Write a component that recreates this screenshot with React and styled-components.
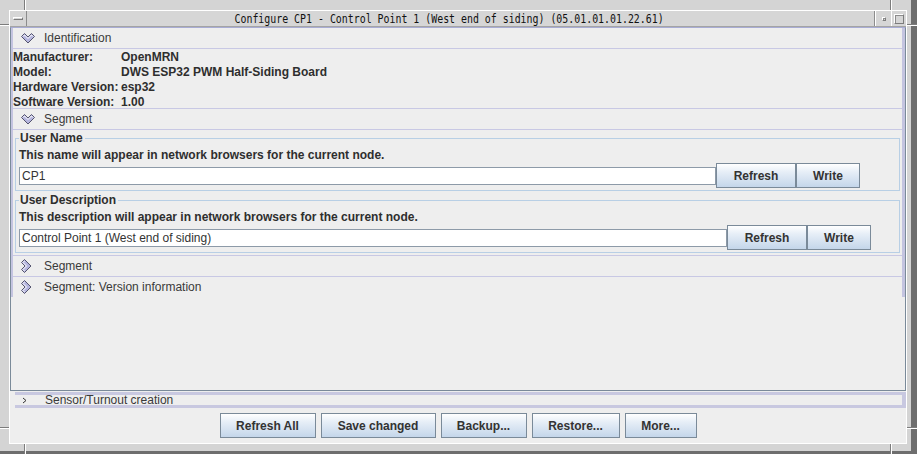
import React from 'react'
import styled, { createGlobalStyle } from 'styled-components'

const GlobalStyle = createGlobalStyle`
  * { box-sizing: border-box; }
  html, body { margin: 0; padding: 0; background: #6e6e6e; }
  body {
    font-family: "Liberation Sans", Arial, sans-serif;
    font-size: 12px;
    color: #333;
  }
`

const Screen = styled.div`
  position: relative;
  width: 917px;
  height: 454px;
  overflow: hidden;
  background: #6e6e6e;
`

const Frame = styled.div`
  width: 911px;
  height: 451px;
  background: #d4d4d4;
  padding: 10px 4px 7px 9px;
`

const Tick = styled.div`
  position: absolute;
  left: ${p => p.$left}px;
  top: ${p => p.$top}px;
  width: ${p => (p.$vertical ? 2 : p.$len)}px;
  height: ${p => (p.$vertical ? p.$len : 2)}px;
  ${p => p.$vertical
    ? 'border-left: 1px solid #7c7c7c; border-right: 1px solid #fff;'
    : 'border-top: 1px solid #7c7c7c; border-bottom: 1px solid #fff;'}
`

const Window = styled.div`
  height: 100%;
  display: flex;
  flex-direction: column;
  border-left: 1px solid #fff;
  border-right: 1px solid #fff;
  border-bottom: 1px solid #fff;
`

const TitleBar = styled.div`
  height: 17px;
  display: flex;
  background: #d6d6d6;
  border-top: 1px solid #fff;
  border-bottom: 1px solid #a4a4a4;
`

const TitleButton = styled.div`
  width: ${p => p.$w}px;
  display: flex;
  align-items: center;
  justify-content: center;
  border-left: ${p => (p.$menu ? 'none' : '1px solid #fff')};
  border-right: ${p => (p.$menu ? '1px solid #8c8c8c' : 'none')};
  box-shadow: ${p => (p.$sep ? '-1px 0 0 #8c8c8c' : 'none')};
`

const MenuGlyph = styled.span`
  width: 10px;
  height: 3px;
  border-top: 1px solid #fff;
  border-left: 1px solid #fff;
  border-bottom: 1px solid #7c7c7c;
  border-right: 1px solid #7c7c7c;
`

const BoxGlyph = styled.span`
  width: ${p => p.$size}px;
  height: ${p => p.$size}px;
  border-top: 1px solid #fff;
  border-left: 1px solid #fff;
  border-bottom: 1px solid #7c7c7c;
  border-right: 1px solid #7c7c7c;
  box-shadow: inset 1px 1px 0 #8c8c8c;
`

const Title = styled.div`
  flex: 1;
  display: flex;
  align-items: center;
  justify-content: center;
  overflow: hidden;
  white-space: nowrap;
  span {
    display: inline-block;
    font-family: "DejaVu Sans Mono", "Liberation Mono", monospace;
    font-size: 12px;
    color: #111;
    transform: scaleX(0.825);
    margin-left: -4px;
  }
`

const Body = styled.div`
  flex: 1;
  display: flex;
  flex-direction: column;
  background: #eeeeee;
  padding-bottom: 5px;
`

const ScrollPane = styled.div`
  height: 364px;
  border: 1px solid #7a8a99;
  border-top-color: #a8acd4;
`

const Panel = styled.div`
  border-left: 2px solid #c4c4e0;
  border-right: 3px solid #c4c4e0;
`

const Header = styled.div`
  height: ${p => (p.$last ? 20 : 21)}px;
  display: flex;
  align-items: center;
  padding-left: 8px;
  border-bottom: ${p => (p.$last ? 'none' : '1px solid #c8c8e4')};
  color: #3a3a3a;
`

const IconBox = styled.span`
  width: 23px;
  display: flex;
  align-items: center;
`

const InfoGrid = styled.div`
  height: 60px;
  display: grid;
  grid-template-columns: 108px 1fr;
  grid-auto-rows: 15px;
  align-items: center;
  font-weight: bold;
  color: #2e2e2e;
  border-bottom: 1px solid #c8c8e4;
`

const SegmentBody = styled.div`
  padding: 1px 2px 2px 2px;
  border-bottom: 1px solid #c8c8e4;
`

const Group = styled.fieldset`
  margin: 0;
  min-width: 0;
  border: 1px solid #b8cfe5;
  padding: 3px 4px 2px 3px;
  & + & { margin-top: 2px; }
`

const Legend = styled.legend`
  padding: 0 2px 0 1px;
  line-height: 14px;
  font-weight: bold;
  color: #2e2e2e;
`

const Desc = styled.div`
  line-height: 15px;
  font-weight: bold;
  color: #2e2e2e;
`

const FieldRow = styled.div`
  height: 25px;
  display: flex;
  align-items: center;
`

const TextField = styled.input`
  width: ${p => p.$w}px;
  height: 18px;
  margin: 0;
  padding: 0 2px;
  border: 1px solid #8d9aa8;
  background: #fff;
  font-family: "Liberation Sans", Arial, sans-serif;
  font-size: 12px;
  color: #333;
  outline: none;
`

const Button = styled.button`
  width: ${p => p.$w}px;
  height: 25px;
  margin: 0;
  padding: 0;
  flex: none;
  border: 1px solid #7a8a99;
  background: linear-gradient(#ffffff 0%, #e6eef7 35%, #c4d6ea 100%);
  font-family: "Liberation Sans", Arial, sans-serif;
  font-size: 12px;
  font-weight: bold;
  color: #333;
`

const SubPane = styled.div`
  height: 16px;
  margin: 1px 0 0 5px;
  display: flex;
  align-items: center;
  padding-left: 7px;
  border-top: 3px solid #c8c8e0;
  border-bottom: 3px solid #c8c8e0;
  border-right: 4px solid #c8c8e0;
  line-height: 10px;
  color: #3a3a3a;
`

const ButtonBar = styled.div`
  margin-top: 5px;
  height: 25px;
  display: flex;
  justify-content: center;
  gap: 5px;
`

const ChevronDown = () => (
  <svg width="14" height="11" viewBox="0 0 14 11">
    <path d="M0.5 3.5 L3.5 0.5 L7 4 L10.5 0.5 L13.5 3.5 L7 10 Z" fill="#b6b6de" stroke="#55556e" strokeWidth="1" />
    <path d="M2 3.5 L3.5 2 L7 5.5 L10.5 2 L12 3.5" fill="none" stroke="#fff" strokeWidth="1" />
  </svg>
)

const ChevronRight = () => (
  <svg width="11" height="14" viewBox="0 0 11 14">
    <path d="M3.5 0.5 L0.5 3.5 L4 7 L0.5 10.5 L3.5 13.5 L10 7 Z" fill="#b6b6de" stroke="#55556e" strokeWidth="1" />
    <path d="M3.5 2 L2 3.5 L5.5 7 L2 10.5 L3.5 12" fill="none" stroke="#fff" strokeWidth="1" />
  </svg>
)

const SmallArrow = () => (
  <svg width="6" height="7" viewBox="0 0 6 7">
    <path d="M1 1 L4 3.5 L1 6" fill="none" stroke="#333" strokeWidth="1" />
  </svg>
)

const info = [
  ['Manufacturer:', 'OpenMRN'],
  ['Model:', 'DWS ESP32 PWM Half-Siding Board'],
  ['Hardware Version:', 'esp32'],
  ['Software Version:', '1.00'],
]

const groups = [
  { title: 'User Name', desc: 'This name will appear in network browsers for the current node.', value: 'CP1', w: 697 },
  { title: 'User Description', desc: 'This description will appear in network browsers for the current node.', value: 'Control Point 1 (West end of siding)', w: 708 },
]

const actions = [
  ['Refresh All', 96],
  ['Save changed', 115],
  ['Backup...', 86],
  ['Restore...', 88],
  ['More...', 72],
]

export default function App() {
  return (
    <Screen>
      <GlobalStyle />
      <Frame>
        <Window>
          <TitleBar>
            <TitleButton $w={17} $menu><MenuGlyph /></TitleButton>
            <Title><span>Configure CP1 - Control Point 1 (West end of siding) (05.01.01.01.22.61)</span></Title>
            <TitleButton $w={16} $sep><BoxGlyph $size={4} /></TitleButton>
            <TitleButton $w={15}><BoxGlyph $size={10} /></TitleButton>
          </TitleBar>
          <Body>
            <ScrollPane>
              <Panel>
                <Header><IconBox><ChevronDown /></IconBox>Identification</Header>
                <InfoGrid>
                  {info.map(([k, v]) => (
                    <React.Fragment key={k}>
                      <span>{k}</span>
                      <span>{v}</span>
                    </React.Fragment>
                  ))}
                </InfoGrid>
                <Header><IconBox><ChevronDown /></IconBox>Segment</Header>
                <SegmentBody>
                  {groups.map(g => (
                    <Group key={g.title}>
                      <Legend>{g.title}</Legend>
                      <Desc>{g.desc}</Desc>
                      <FieldRow>
                        <TextField $w={g.w} defaultValue={g.value} readOnly />
                        <Button $w={80}>Refresh</Button>
                        <Button $w={64}>Write</Button>
                      </FieldRow>
                    </Group>
                  ))}
                </SegmentBody>
                <Header><IconBox><ChevronRight /></IconBox>Segment</Header>
                <Header $last><IconBox><ChevronRight /></IconBox>Segment: Version information</Header>
              </Panel>
            </ScrollPane>
            <SubPane><IconBox><SmallArrow /></IconBox>Sensor/Turnout creation</SubPane>
            <ButtonBar>
              {actions.map(([label, w]) => (
                <Button key={label} $w={w}>{label}</Button>
              ))}
            </ButtonBar>
          </Body>
        </Window>
      </Frame>
      <Tick $vertical $left={24} $top={0} $len={10} />
      <Tick $vertical $left={890} $top={0} $len={10} />
      <Tick $left={0} $top={24} $len={9} />
      <Tick $left={907} $top={24} $len={10} />
      <Tick $left={0} $top={427} $len={9} />
      <Tick $left={907} $top={427} $len={10} />
      <Tick $vertical $left={24} $top={444} $len={10} />
      <Tick $vertical $left={890} $top={444} $len={10} />
    </Screen>
  )
}
